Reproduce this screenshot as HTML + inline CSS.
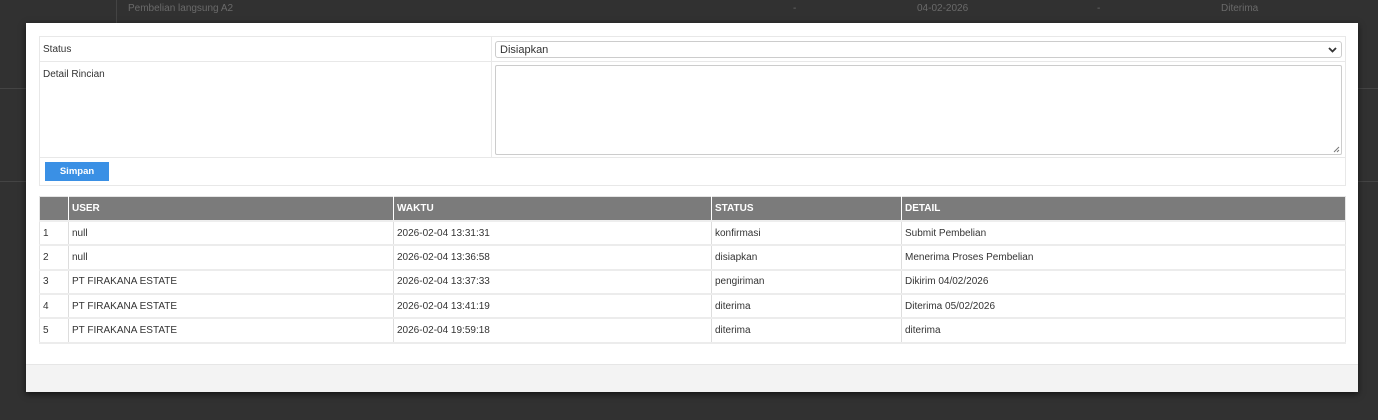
<!DOCTYPE html>
<html><head><style>
*{margin:0;padding:0;box-sizing:border-box}
body{width:1378px;height:420px;background:#313131;font-family:"Liberation Sans",sans-serif;font-size:10px;color:#333;position:relative;overflow:hidden}
.bg{position:absolute;color:#6a6a6a;font-size:10px}
.modal{position:absolute;left:26px;top:23px;width:1332px;height:369px;background:#fff;box-shadow:0 2px 6px rgba(0,0,0,.6)}
.foot{position:absolute;left:0;right:0;bottom:0;height:28px;background:#f3f3f3;border-top:1px solid #e6e6e6}
.form{position:absolute;left:13px;top:13px;width:1307px;height:150px;border:1px solid #e8e8e8}
.a{position:absolute}
table{position:absolute;left:13px;top:173px;width:1307px;border-collapse:collapse;border:1px solid #e5e5e5}
td,th{height:24.4px;padding:0 3px;text-align:left;border-left:1px solid #ddd;border-bottom:2px solid #ececec;font-size:10px;white-space:nowrap}
th{background:#7b7b7b;color:#fff;font-weight:bold;border-left:1px solid #fff;border-bottom:2px solid #eee}
th:first-child,td:first-child{border-left:none}
</style></head><body>
<div class="bg" style="left:116px;top:0;width:1px;height:23px;background:#444"></div>
<div class="bg" style="left:128px;top:3px">Pembelian langsung A2</div>
<div class="bg" style="left:793px;top:3px">-</div>
<div class="bg" style="left:917px;top:3px">04-02-2026</div>
<div class="bg" style="left:1097px;top:3px">-</div>
<div class="bg" style="left:1221px;top:3px">Diterima</div>
<div class="bg" style="left:1358px;top:88px;width:20px;height:1px;background:#444"></div>
<div class="bg" style="left:0;top:88px;width:26px;height:1px;background:#444"></div>
<div class="bg" style="left:0;top:181px;width:26px;height:1px;background:#444"></div>
<div class="bg" style="left:1358px;top:181px;width:20px;height:1px;background:#444"></div>
<div class="modal">
 <div class="form">
  <div class="a" style="left:0;top:24px;width:1305px;height:1px;background:#e8e8e8"></div>
  <div class="a" style="left:0;top:120px;width:1305px;height:1px;background:#e8e8e8"></div>
  <div class="a" style="left:451px;top:0;width:1px;height:120px;background:#e8e8e8"></div>
  <div class="a" style="left:3px;top:7px">Status</div>
  <div class="a" style="left:3px;top:32px">Detail Rincian</div>
  <div class="a" style="left:455px;top:4px;width:847px;height:17px;border:1px solid #ccc;border-radius:3px;padding:2px 4px;font-size:11px">Disiapkan
   <svg style="position:absolute;right:4px;top:5px" width="9" height="6" viewBox="0 0 9 6"><path d="M1 1l3.5 3.5L8 1" stroke="#333" stroke-width="1.8" fill="none"/></svg></div>
  <div class="a" style="left:455px;top:28px;width:847px;height:90px;border:1px solid #ccc;border-radius:2px">
   <svg style="position:absolute;right:1px;bottom:1px" width="7" height="7"><path d="M6 1L1 6M6 4L4 6" stroke="#777"/></svg></div>
  <div class="a" style="left:5px;top:125px;width:64px;height:19px;background:#3a90e5;color:#fff;font-weight:bold;font-size:9.5px;text-align:center;line-height:19px">Simpan</div>
 </div>
 <table>
  <tr><th style="width:29px"></th><th style="width:325px">USER</th><th style="width:318px">WAKTU</th><th style="width:190px">STATUS</th><th>DETAIL</th></tr>
  <tr><td>1</td><td>null</td><td>2026-02-04 13:31:31</td><td>konfirmasi</td><td>Submit Pembelian</td></tr>
  <tr><td>2</td><td>null</td><td>2026-02-04 13:36:58</td><td>disiapkan</td><td>Menerima Proses Pembelian</td></tr>
  <tr><td>3</td><td>PT FIRAKANA ESTATE</td><td>2026-02-04 13:37:33</td><td>pengiriman</td><td>Dikirim 04/02/2026</td></tr>
  <tr><td>4</td><td>PT FIRAKANA ESTATE</td><td>2026-02-04 13:41:19</td><td>diterima</td><td>Diterima 05/02/2026</td></tr>
  <tr><td>5</td><td>PT FIRAKANA ESTATE</td><td>2026-02-04 19:59:18</td><td>diterima</td><td>diterima</td></tr>
 </table>
 <div class="foot"></div>
</div>
</body></html>
